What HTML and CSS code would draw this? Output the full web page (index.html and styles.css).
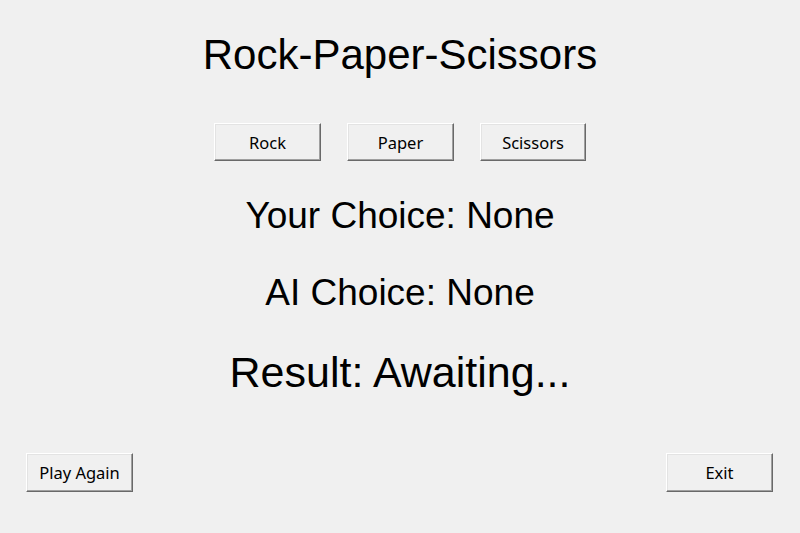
FILE: index.html
```html
<!DOCTYPE html>
<html>
<head>
<meta charset="utf-8">
<title>Rock-Paper-Scissors</title>
<link rel="stylesheet" href="styles.css">
</head>
<body>
<div class="app">
  <h1 class="title">Rock-Paper-Scissors</h1>
  <div class="choices">
    <button class="btn">Rock</button>
    <button class="btn">Paper</button>
    <button class="btn">Scissors</button>
  </div>
  <div class="label your">Your Choice: None</div>
  <div class="label ai">AI Choice: None</div>
  <div class="result">Result: Awaiting...</div>
  <div class="bottom">
    <button class="btn">Play Again</button>
    <button class="btn">Exit</button>
  </div>
</div>
</body>
</html>
```

FILE: styles.css
```css
html, body {
  margin: 0;
  padding: 0;
  background: #f0f0f0;
}
.app {
  width: 800px;
  height: 533px;
  display: flex;
  flex-direction: column;
  align-items: center;
  font-family: "Liberation Sans", Arial, sans-serif;
  color: #000;
  padding-top: 31px;
  box-sizing: border-box;
}
.title {
  margin: 0;
  font-weight: normal;
  font-size: 42px;
  line-height: 48px;
}
.choices {
  margin-top: 44px;
  display: flex;
  gap: 26px;
}
.btn {
  width: 107px;
  height: 38px;
  margin: 0;
  padding: 0;
  background: #f0f0f0;
  border: 1px solid;
  border-color: #ffffff #696969 #696969 #ffffff;
  box-shadow: inset -1px -1px 0 #a0a0a0, inset 1px 1px 0 #e3e3e3;
  font-family: "Noto Sans", sans-serif;
  font-size: 16.5px;
  color: #000;
  box-sizing: border-box;
}
.choices .btn:nth-child(3) {
  width: 106px;
}
.label {
  font-size: 37px;
  line-height: 42px;
}
.your {
  margin-top: 34px;
}
.ai {
  margin-top: 35px;
}
.result {
  margin-top: 34px;
  font-size: 43px;
  line-height: 48px;
}
.bottom {
  align-self: stretch;
  margin-top: 57px;
  display: flex;
  justify-content: space-between;
  padding: 0 27px 0 26px;
}
.bottom .btn {
  height: 39px;
}
```
